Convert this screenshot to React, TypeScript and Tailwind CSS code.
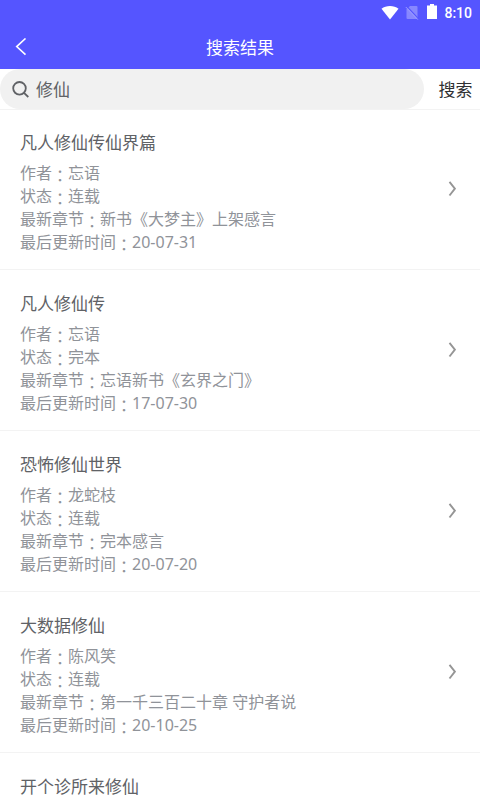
type Book = {
    title: string;
    author?: string;
    status?: string;
    chapter?: string;
    updatedAt?: string;
};

const books: Book[] = [
    { title: "凡人修仙传仙界篇", author: "忘语", status: "连载", chapter: "新书《大梦主》上架感言", updatedAt: "20-07-31" },
    { title: "凡人修仙传", author: "忘语", status: "完本", chapter: "忘语新书《玄界之门》", updatedAt: "17-07-30" },
    { title: "恐怖修仙世界", author: "龙蛇枝", status: "连载", chapter: "完本感言", updatedAt: "20-07-20" },
    { title: "大数据修仙", author: "陈风笑", status: "连载", chapter: "第一千三百二十章 守护者说", updatedAt: "20-10-25" },
    { title: "开个诊所来修仙" },
];

function StatusBar() {
    return (
        <div className="flex h-6 items-center justify-end pr-2 text-white">
            <svg className="mr-1.5 h-[15px] w-[18px]" viewBox="0 0 18 15" fill="currentColor">
                <path d="M9 14.6L0.500 3.700C2.800 1.900 5.800 0.900 9 0.900s6.200 1 8.500 2.800z" />
            </svg>
            <svg className="mr-2 h-[15px] w-[14px]" viewBox="0 0 14 15">
                <path d="M5 1h6.500q1 0 1 1v11q0 1-1 1H2.500q-1 0-1-1V4.500z" fill="#8888ff" />
                <path d="M1.600 1.200L13.400 13.600" stroke="#5555ff" strokeWidth="1.200" />
                <path d="M0.800 2L12.800 14.600" stroke="#a0a0ff" strokeWidth="0.900" />
            </svg>
            <svg className="mr-[7px] mb-0.5 h-[15px] w-[10px]" viewBox="0 0 10 15" fill="currentColor">
                <path d="M3 0h4v1.500h3V15H0V1.500h3z" />
            </svg>
            <span className="mt-0.5 font-[Roboto] text-sm leading-5 font-medium">8:10</span>
        </div>
    );
}

function Header() {
    return (
        <header className="h-[69px] bg-[#5555ff] text-white">
            <StatusBar />
            <div className="grid h-[45px] grid-cols-[48px_1fr_48px] items-center">
                <svg className="ml-[15px] h-[18px] w-3" viewBox="0 0 12 18" fill="none" stroke="currentColor" strokeWidth="1.600">
                    <path d="M10.500 0.500L1.700 8.600l8.800 8.100" />
                </svg>
                <h1 className="pt-0.5 text-center text-[17px] leading-6">搜索结果</h1>
            </div>
        </header>
    );
}

function SearchBar() {
    return (
        <div className="flex h-[41px] items-start border-b border-[#f3f3f3]">
            <div className="flex h-10 w-[424px] items-center rounded-full bg-[#f1f1f1] pl-3">
                <svg className="mr-[7px] h-[17px] w-[17px]" viewBox="0 0 17 17" fill="none" stroke="#606266" strokeWidth="1.800">
                    <circle cx="7.500" cy="7.300" r="6.300" />
                    <path d="M12 11.800L16.300 16" />
                </svg>
                <span className="pt-0.5 text-[17px] leading-6 text-[#606266]">修仙</span>
            </div>
            <button className="h-10 flex-1 pt-0.5 pl-[7px] text-center text-[17px] text-[#303133]">搜索</button>
        </div>
    );
}

function Field({ label, value }: { label: string; value?: string }) {
    return (
        <p className="h-[23px] whitespace-nowrap">
            {label}
            <span className="inline-block align-[-3px] font-['Noto_Sans_CJK_TC',sans-serif] leading-none">：</span>
            {value}
        </p>
    );
}

function BookItem({ book }: { book: Book }) {
    return (
        <li className="flex h-[161px] items-start justify-between border-b border-[#f3f3f3] pt-[22px] pr-6 pl-5">
            <div>
                <h2 className="mb-[7px] text-[17px] leading-6 text-[#606266]">{book.title}</h2>
                {book.author && (
                    <div className="text-base leading-[23px] text-[#909399]">
                        <Field label="作者" value={book.author} />
                        <Field label="状态" value={book.status} />
                        <Field label="最新章节" value={book.chapter} />
                        <Field label="最后更新时间" value={book.updatedAt} />
                    </div>
                )}
            </div>
            <svg className="mt-[50px] h-4 w-2" viewBox="0 0 8 16" fill="none" stroke="#959595" strokeWidth="1.900">
                <path d="M1.500 0.900L6.900 7.700l-5.400 6.800" />
            </svg>
        </li>
    );
}

export default function App() {
    return (
        <div className="h-[800px] w-[480px] overflow-hidden bg-white font-['Noto_Sans','Noto_Sans_CJK_SC',sans-serif]">
            <Header />
            <SearchBar />
            <ul className="-mt-px">
                {books.map((book) => (
                    <BookItem key={book.title} book={book} />
                ))}
            </ul>
        </div>
    );
}
